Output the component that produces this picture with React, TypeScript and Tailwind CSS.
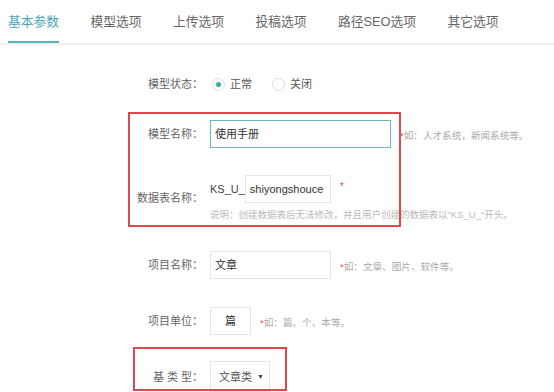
const tabs = ['基本参数', '模型选项', '上传选项', '投稿选项', '路径SEO选项', '其它选项']

function Label({ children }: { children: React.ReactNode }) {
  return <div className="w-[203px] shrink-0 text-right text-[11px] text-[#666]">{children}</div>
}

function Hint({ children }: { children: React.ReactNode }) {
  return (
    <span className="text-[9.6px] text-[#aaa]">
      <span className="text-[#e44]">*</span>
      {children}
    </span>
  )
}

export default function App() {
  return (
    <div
      className="relative h-[392px] w-[554px] overflow-hidden bg-white"
      style={{ fontFamily: '"Liberation Sans", "Noto Sans CJK SC", sans-serif' }}
    >
      <div className="flex gap-[31.5px] border-b-2 border-[#eef0f0] pl-2">
        {tabs.map((t, i) => (
          <div
            key={t}
            className={`flex h-[43px] items-center border-b-2 pt-[3px] text-[12.75px] ${
              i === 0 ? 'border-[#5ab0bf] text-[#4aa6b6]' : 'border-transparent text-[#666]'
            }`}
          >
            {t}
          </div>
        ))}
      </div>

      <div className="flex flex-col">
        <div className="mt-[25px] flex h-[28px] items-center">
          <Label>模型状态：</Label>
          <div className="ml-[9px] flex items-center text-[11px] text-[#555]">
            <span className="flex h-[13px] w-[13px] items-center justify-center rounded-full border border-[#ddd]">
              <span className="h-[5px] w-[5px] rounded-full bg-[#2fb1a5]" />
            </span>
            <span className="ml-[5px]">正常</span>
            <span className="ml-[20px] h-[13px] w-[13px] rounded-full border border-[#ddd]" />
            <span className="ml-[5px]">关闭</span>
          </div>
        </div>

        <div className="mt-[22px] flex h-[28px] items-center">
          <Label>模型名称：</Label>
          <div className="ml-[7px] flex h-[28px] w-[181px] items-center border border-[#6bb9c4] px-[4px] text-[11px] text-[#333]">
            使用手册
          </div>
          <span className="ml-[9px]">
            <Hint>如：人才系统，新闻系统等。</Hint>
          </span>
        </div>

        <div className="mt-[27px] flex items-center">
          <Label>数据表名称：</Label>
          <div className="ml-[7px] flex flex-col">
            <div className="flex items-center text-[11px] text-[#444]">
              <span>KS_U_</span>
              <div className="flex h-[28px] w-[86px] items-center border border-[#e5e5e5] px-[4px] text-[#333]">
                shiyongshouce
              </div>
              <span className="ml-[9px] -mt-[6px] text-[10px] text-[#e44]">*</span>
            </div>
            <div className="mt-[5px] text-[9.5px] text-[#bbb]">
              说明：创建数据表后无法修改，并且用户创建的数据表以"KS_U_"开头。
            </div>
          </div>
        </div>

        <div className="mt-[29px] flex h-[28px] items-center">
          <Label>项目名称：</Label>
          <div className="ml-[7px] flex h-[28px] w-[121px] items-center border border-[#e5e5e5] px-[4px] text-[11px] text-[#333]">
            文章
          </div>
          <span className="ml-[9px]">
            <Hint>如：文章、图片、软件等。</Hint>
          </span>
        </div>

        <div className="mt-[28px] flex h-[28px] items-center">
          <Label>项目单位：</Label>
          <div className="ml-[7px] flex h-[28px] w-[41px] items-center justify-center border border-[#e5e5e5] text-[11px] text-[#333]">
            篇
          </div>
          <span className="ml-[9px]">
            <Hint>如：篇、个、本等。</Hint>
          </span>
        </div>

        <div className="mt-[26px] flex h-[31px] items-center">
          <Label>基 类 型：</Label>
          <div className="ml-[7px] flex h-[31px] w-[60px] items-center justify-between border border-[#e5e5e5] pl-[8px] pr-[5px] text-[11px] text-[#555]">
            <span>文章类</span>
            <span className="text-[7px] text-[#444]">▼</span>
          </div>
        </div>
      </div>

      <div className="pointer-events-none absolute left-[128px] top-[112px] h-[115px] w-[273px] border-2 border-[#e2474c]" />
      <div className="pointer-events-none absolute left-[133px] top-[347px] h-[44px] w-[154px] border-2 border-[#e2474c]" />
    </div>
  )
}
